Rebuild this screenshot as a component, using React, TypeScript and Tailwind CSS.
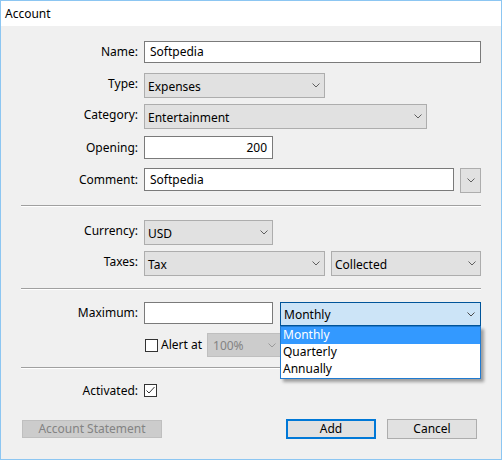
import React from 'react';

function Chevron({ color = '#5f5f5f' }: { color?: string }) {
  return (
    <svg width="8" height="5" viewBox="0 0 8 5" className="shrink-0">
      <polyline points="0.5,0.5 4,4 7.5,0.5" fill="none" stroke={color} strokeWidth="1" />
    </svg>
  );
}

function Label({ children, select }: { children: React.ReactNode; select?: boolean }) {
  return (
    <div className={'w-[137px] shrink-0 text-right ' + (select ? 'pb-[4px]' : '')}>{children}</div>
  );
}

function Select({ value, className }: { value: string; className: string }) {
  return (
    <div
      className={
        'flex h-[25px] items-center justify-between border border-[#adadad] bg-[#e1e1e1] pl-[3px] pr-[4px] ' +
        className
      }
    >
      <span className="pt-[2px]">{value}</span>
      <Chevron />
    </div>
  );
}

function Input({ value, className }: { value?: string; className: string }) {
  return (
    <div className={'flex items-center border border-[#7a7a7a] bg-white px-[5px] ' + className}>
      {value}
    </div>
  );
}

function Checkbox({ checked }: { checked?: boolean }) {
  return (
    <div className="flex h-[13px] w-[13px] shrink-0 items-center justify-center border border-[#333333] bg-white">
      {checked && (
        <svg width="11" height="11" viewBox="0 0 11 11">
          <polyline points="1.5,5.5 4,8 9.5,2" fill="none" stroke="#333333" strokeWidth="1" />
        </svg>
      )}
    </div>
  );
}

function Separator({ className }: { className: string }) {
  return <div className={'ml-[20px] h-0 w-[460px] border-t border-b border-t-[#a0a0a0] border-b-white ' + className} />;
}

export default function App() {
  return (
    <div className="flex h-[460px] w-[502px] flex-col border border-[#8cc6f2] bg-[#f0f0f0] font-['Noto_Sans',sans-serif] text-[12px] leading-[16px] text-black">
      {/* Title bar */}
      <div className="flex h-[25px] shrink-0 items-center bg-white pl-[4px]">Account</div>

      <div className="mt-[15px] flex h-[22px] items-center">
        <Label>Name:</Label>
        <Input value="Softpedia" className="ml-[6px] h-[22px] w-[337px]" />
      </div>

      <div className="mt-[10px] flex items-center">
        <Label select>Type:</Label>
        <Select value="Expenses" className="ml-[6px] w-[181px]" />
      </div>

      <div className="mt-[6px] flex items-center">
        <Label select>Category:</Label>
        <Select value="Entertainment" className="ml-[6px] w-[283px]" />
      </div>

      <div className="mt-[7px] flex items-center">
        <Label>Opening:</Label>
        <Input value="200" className="ml-[6px] h-[23px] w-[129px] justify-end" />
      </div>

      <div className="mt-[9px] flex items-start">
        <Label>
          <div className="flex h-[23px] items-center justify-end">Comment:</div>
        </Label>
        <Input value="Softpedia" className="ml-[6px] h-[23px] w-[310px]" />
        <div className="ml-[6px] flex h-[25px] w-[21px] items-center justify-center border border-[#adadad] bg-[#e1e1e1]">
          <Chevron />
        </div>
      </div>

      <Separator className="mt-[12px]" />

      <div className="mt-[13px] flex items-center">
        <Label select>Currency:</Label>
        <Select value="USD" className="ml-[6px] w-[129px]" />
      </div>

      <div className="mt-[6px] flex items-center">
        <Label select>Taxes:</Label>
        <Select value="Tax" className="ml-[6px] w-[181px]" />
        <Select value="Collected" className="ml-[6px] w-[150px]" />
      </div>

      <Separator className="mt-[12px]" />

      <div className="mt-[12px] flex items-start">
        <Label>
          <div className="flex h-[22px] items-center justify-end">Maximum:</div>
        </Label>
        <Input className="ml-[6px] h-[22px] w-[129px]" />
        <div className="relative z-10 ml-[7px]">
          <div className="flex h-[24px] w-[201px] items-center justify-between border border-[#005499] bg-[#cce4f7] pl-[3px] pr-[5px]">
            <span className="pt-[2px]">Monthly</span>
            <Chevron color="#4a4a4a" />
          </div>
          {/* open dropdown list */}
          <div className="absolute left-0 top-full w-[201px] border border-[#1f7ad0] bg-white shadow-[3px_3px_3px_rgba(0,0,0,0.35)]">
            <div className="h-[17px] bg-[#3399ff] pl-[2px] text-white">Monthly</div>
            <div className="h-[17px] pl-[2px]">Quarterly</div>
            <div className="h-[17px] pl-[2px]">Annually</div>
          </div>
        </div>
      </div>

      <div className="mt-[7px] flex h-[24px] items-center pl-[144px]">
        <Checkbox />
        <span className="ml-[3px]">Alert at</span>
        <div className="ml-[5px] flex h-[24px] w-[74px] items-center justify-between border border-[#bfbfbf] bg-[#cccccc] pl-[5px] pr-[4px] text-[#838383]">
          <span className="pt-[2px]">100%</span>
          <Chevron color="#9a9a9a" />
        </div>
      </div>

      <Separator className="mt-[10px]" />

      <div className="mt-[15px] flex h-[13px] items-center">
        <Label>Activated:</Label>
        <div className="ml-[6px]">
          <Checkbox checked />
        </div>
      </div>

      <div className="mt-[22px] flex h-[20px] items-center">
        <button className="ml-[21px] flex h-[18px] w-[140px] items-center justify-center border border-[#bfbfbf] bg-[#cccccc] text-[#838383]">
          Account Statement
        </button>
        <button className="ml-[124px] flex h-[20px] w-[90px] items-center justify-center border-2 border-[#0078d7] bg-[#e1e1e1]">
          Add
        </button>
        <button className="ml-[11px] flex h-[20px] w-[90px] items-center justify-center border border-[#adadad] bg-[#e1e1e1]">
          Cancel
        </button>
      </div>
    </div>
  );
}
